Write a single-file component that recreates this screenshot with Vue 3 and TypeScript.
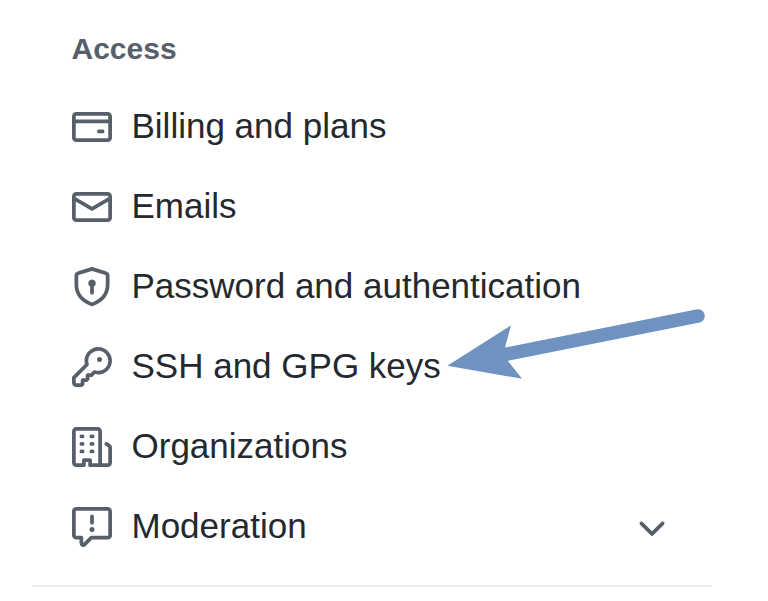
<script setup lang="ts">
interface NavItem {
  label: string
  icon: string
  expandable?: boolean
}

const items: NavItem[] = [
  {
    label: 'Billing and plans',
    icon: 'M10.75 9a.75.75 0 0 0 0 1.5h1.5a.75.75 0 0 0 0-1.5h-1.5Z M0 3.75C0 2.784.784 2 1.75 2h12.5c.966 0 1.75.784 1.75 1.75v8.5A1.75 1.75 0 0 1 14.25 14H1.75A1.75 1.75 0 0 1 0 12.25ZM14.5 6.5h-13v5.75c0 .138.112.25.25.25h12.5a.25.25 0 0 0 .25-.25Zm0-2.75a.25.25 0 0 0-.25-.25H1.75a.25.25 0 0 0-.25.25V5h13Z',
  },
  {
    label: 'Emails',
    icon: 'M1.75 2h12.5c.966 0 1.75.784 1.75 1.75v8.5A1.75 1.75 0 0 1 14.25 14H1.75A1.75 1.75 0 0 1 0 12.25v-8.5C0 2.784.784 2 1.75 2ZM1.5 12.251c0 .138.112.25.25.25h12.5a.25.25 0 0 0 .25-.25V5.809L8.38 9.397a.75.75 0 0 1-.76 0L1.5 5.809v6.442Zm13-8.181v-.32a.25.25 0 0 0-.25-.25H1.75a.25.25 0 0 0-.25.25v.32L8 7.88Z',
  },
  {
    label: 'Password and authentication',
    icon: 'm8.533.133 5.25 1.68A1.75 1.75 0 0 1 15 3.48V7c0 1.566-.32 3.182-1.303 4.682-.983 1.498-2.585 2.813-5.032 3.855a1.697 1.697 0 0 1-1.33 0c-2.447-1.042-4.049-2.357-5.032-3.855C1.32 10.182 1 8.566 1 7V3.48a1.75 1.75 0 0 1 1.217-1.667l5.25-1.68a1.748 1.748 0 0 1 1.066 0Zm-.61 1.429.001.001-5.25 1.68a.251.251 0 0 0-.174.237V7c0 1.36.275 2.666 1.057 3.859.784 1.194 2.121 2.342 4.366 3.298a.196.196 0 0 0 .154 0c2.245-.957 3.582-2.103 4.366-3.297C13.225 9.666 13.5 8.358 13.5 7V3.48a.25.25 0 0 0-.174-.238l-5.25-1.68a.25.25 0 0 0-.153 0ZM9.5 6.5c0 .536-.286 1.032-.75 1.3v2.45a.75.75 0 0 1-1.5 0V7.8A1.5 1.5 0 1 1 9.5 6.5Z',
  },
  {
    label: 'SSH and GPG keys',
    icon: 'M10.5 0a5.499 5.499 0 1 1-1.288 10.848l-.932.932a.749.749 0 0 1-.53.22H7v.75a.749.749 0 0 1-.22.53l-.5.5a.749.749 0 0 1-.53.22H5v.75a.749.749 0 0 1-.22.53l-.5.5a.749.749 0 0 1-.53.22h-2A1.75 1.75 0 0 1 0 14.25v-2c0-.199.079-.389.22-.53l4.932-4.932A5.5 5.5 0 0 1 10.5 0Zm-4 5.5c-.001.431.069.86.205 1.269a.75.75 0 0 1-.181.768L1.5 12.56v1.69c0 .138.112.25.25.25h1.69l.06-.06v-1.19a.75.75 0 0 1 .75-.75h1.19l.06-.06v-1.19a.75.75 0 0 1 .75-.75h1.19l1.023-1.025a.75.75 0 0 1 .768-.18A4 4 0 1 0 6.5 5.5ZM11 6a1 1 0 1 1 0-2 1 1 0 0 1 0 2Z',
  },
  {
    label: 'Organizations',
    icon: 'M1.75 16A1.75 1.75 0 0 1 0 14.25V1.75C0 .784.784 0 1.75 0h8.5C11.216 0 12 .784 12 1.75v12.5c0 .085-.006.168-.018.25h2.268a.25.25 0 0 0 .25-.25V8.285a.25.25 0 0 0-.111-.208l-1.055-.703a.749.749 0 1 1 .832-1.248l1.055.703c.487.325.779.871.779 1.456v5.965A1.75 1.75 0 0 1 14.25 16h-3.5a.766.766 0 0 1-.197-.026c-.099.017-.2.026-.303.026h-3a.75.75 0 0 1-.75-.75V14h-1v1.25a.75.75 0 0 1-.75.75Zm-.25-1.75c0 .138.112.25.25.25H4v-1.25a.75.75 0 0 1 .75-.75h2.5a.75.75 0 0 1 .75.75v1.25h2.25a.25.25 0 0 0 .25-.25V1.75a.25.25 0 0 0-.25-.25h-8.5a.25.25 0 0 0-.25.25ZM3.75 6h.5a.75.75 0 0 1 0 1.5h-.5a.75.75 0 0 1 0-1.5ZM3 3.75A.75.75 0 0 1 3.75 3h.5a.75.75 0 0 1 0 1.5h-.5A.75.75 0 0 1 3 3.75Zm4 3A.75.75 0 0 1 7.75 6h.5a.75.75 0 0 1 0 1.5h-.5A.75.75 0 0 1 7 6.75ZM7.75 3h.5a.75.75 0 0 1 0 1.5h-.5a.75.75 0 0 1 0-1.5ZM3 9.75A.75.75 0 0 1 3.75 9h.5a.75.75 0 0 1 0 1.5h-.5A.75.75 0 0 1 3 9.75ZM7.75 9h.5a.75.75 0 0 1 0 1.5h-.5a.75.75 0 0 1 0-1.5Z',
  },
  {
    label: 'Moderation',
    icon: 'M0 1.75C0 .784.784 0 1.75 0h12.5C15.216 0 16 .784 16 1.75v9.5A1.75 1.75 0 0 1 14.25 13H8.06l-2.573 2.573A1.458 1.458 0 0 1 3 14.543V13H1.75A1.75 1.75 0 0 1 0 11.25Zm1.75-.25a.25.25 0 0 0-.25.25v9.5c0 .138.112.25.25.25h2a.75.75 0 0 1 .75.75v2.19l2.72-2.72a.749.749 0 0 1 .53-.22h6.5a.25.25 0 0 0 .25-.25v-9.5a.25.25 0 0 0-.25-.25Zm7 2.25v2.5a.75.75 0 0 1-1.5 0v-2.5a.75.75 0 0 1 1.5 0ZM9 9a1 1 0 1 1-2 0 1 1 0 0 1 2 0Z',
    expandable: true,
  },
]
</script>

<template>
  <nav class="settings">
    <h2 class="heading">Access</h2>
    <ul class="list">
      <li v-for="item in items" :key="item.label" class="item">
        <svg class="icon" viewBox="0 0 16 16" aria-hidden="true"><path :d="item.icon" /></svg>
        <span class="label">{{ item.label }}</span>
        <svg v-if="item.expandable" class="icon chevron" viewBox="0 0 16 16" aria-hidden="true">
          <path d="M12.78 5.22a.749.749 0 0 1 0 1.06l-4.25 4.25a.749.749 0 0 1-1.06 0L3.22 6.28a.749.749 0 1 1 1.06-1.06L8 8.939l3.72-3.719a.749.749 0 0 1 1.06 0Z" />
        </svg>
      </li>
    </ul>
    <svg class="arrow" viewBox="0 0 264 72" aria-hidden="true">
      <path d="M2.3 58.8 66 18.3 60 40.5 252.2 2.2A6.8 6.8 0 0 1 254.8 15.5L62.8 53.8 77 71.8Z" />
    </svg>
  </nav>
</template>

<style>
body {
  margin: 0;
  background: #fff;
}
</style>

<style scoped>
.settings {
  position: relative;
  box-sizing: border-box;
  width: 680px;
  height: 587px;
  margin-left: 32px;
  padding: 29px 40px 0;
  border-bottom: 2px solid #e8ebef;
  font-family: "Liberation Sans", Arial, sans-serif;
}

.heading {
  margin: 0 0 0 -0.5px;
  color: #57606a;
  font-size: 30px;
  font-weight: 700;
  line-height: 40px;
}

.list {
  margin: 18px 0 0;
  padding: 0;
  list-style: none;
}

.item {
  display: flex;
  align-items: center;
  gap: 19.5px;
  height: 80px;
}

.icon {
  flex: none;
  width: 40px;
  height: 40px;
  fill: #57606a;
}

.label {
  flex: 1;
  padding-bottom: 2px;
  color: #24292f;
  font-size: 35px;
  line-height: 50px;
  white-space: nowrap;
}

.chevron {
  margin-top: 4px;
}

.arrow {
  position: absolute;
  top: 307px;
  left: 413px;
  width: 264px;
  height: 72px;
  fill: #6f92c0;
}
</style>
